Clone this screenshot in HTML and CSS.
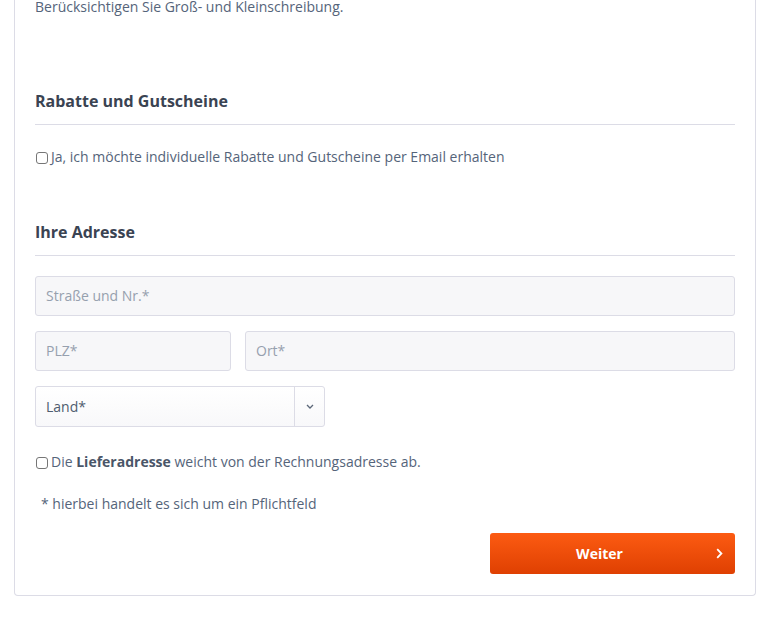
FILE: index.html
```html
<!DOCTYPE html>
<html lang="de">
<head>
<meta charset="utf-8">
<link rel="stylesheet" href="styles.css">
</head>
<body>
<div class="page">
  <div class="card">
    <p class="hint">Berücksichtigen Sie Groß- und Kleinschreibung.</p>

    <h2 class="section-title first">Rabatte und Gutscheine</h2>
    <label class="check-row news"><input type="checkbox" class="cb"><span>Ja, ich möchte individuelle Rabatte und Gutscheine per Email erhalten</span></label>

    <h2 class="section-title second">Ihre Adresse</h2>
    <div class="fields">
      <div class="field full">Straße und Nr.*</div>
      <div class="row">
        <div class="field zip">PLZ*</div>
        <div class="field city">Ort*</div>
      </div>
      <div class="select">
        <span class="select-value">Land*</span>
        <span class="select-arrow">
          <svg width="8" height="5" viewBox="0 0 8 5"><path d="M1 1 L4 4 L7 1" fill="none" stroke="#5b6778" stroke-width="1.3"/></svg>
        </span>
      </div>
    </div>

    <label class="check-row alt"><input type="checkbox" class="cb"><span>Die <b>Lieferadresse</b> weicht von der Rechnungsadresse ab.</span></label>
    <p class="required">* hierbei handelt es sich um ein Pflichtfeld</p>

    <div class="actions">
      <button class="btn-next"><span class="btn-label">Weiter</span>
        <svg class="btn-icon" width="7" height="11" viewBox="0 0 7 11"><path d="M1.2 1.2 L5.4 5.5 L1.2 9.8" fill="none" stroke="#fff" stroke-width="1.8"/></svg>
      </button>
    </div>
  </div>
</div>
</body>
</html>
```
FILE: styles.css
```css
* { box-sizing: border-box; }
html, body { margin: 0; padding: 0; background: #fff; }
body {
  font-family: "Open Sans", "Noto Sans", sans-serif;
  font-size: 14px;
  line-height: 20px;
  color: #55647a;
}
.page { padding: 0 28px 0 14px; }
.card {
  width: 742px;
  border: 1px solid #dcdce6;
  border-top: none;
  border-radius: 0 0 4px 4px;
  padding: 0 20px 21px 20px;
}
.hint { margin: -3px 0 0 0; }
.section-title {
  margin: 0;
  font-size: 16px;
  line-height: 24px;
  font-weight: 700;
  color: #3a4352;
  padding-top: 1px;
  padding-bottom: 11px;
  border-bottom: 1px solid #dcdce6;
}
.section-title.first { margin-top: 71px; }
.section-title.second { margin-top: 52px; }
.check-row {
  display: flex;
  align-items: center;
  margin: 0;
}
.check-row.news { margin-top: 22px; }
.check-row.alt { margin-top: 25px; }
.cb {
  width: 12px;
  height: 12px;
  margin: 1px 3px 0 1px;
  appearance: none;
  -webkit-appearance: none;
  border: 1px solid #767676;
  border-radius: 3px;
  background: #fff;
  flex: none;
}
.check-row b { font-weight: 700; color: #4a5668; }
.fields {
  margin-top: 20px;
  display: flex;
  flex-direction: column;
  gap: 15px;
}
.field {
  height: 40px;
  background: #f7f7f9;
  border: 1px solid #dcdce6;
  border-radius: 3px;
  padding: 0 10px;
  display: flex;
  align-items: center;
  color: #96a0ae;
}
.row { display: flex; gap: 14px; }
.zip { width: 196px; }
.city { flex: 1; }
.select {
  width: 290px;
  height: 41px;
  border: 1px solid #dcdce6;
  border-radius: 3px;
  background: linear-gradient(#ffffff, #f8f8fa);
  display: flex;
  color: #4f5c6f;
}
.select-value { flex: 1; display: flex; align-items: center; padding-left: 10px; }
.select-arrow {
  width: 30px;
  border-left: 1px solid #dcdce6;
  display: flex;
  align-items: center;
  justify-content: center;
}
.required { margin: 22px 0 0 6px; }
.actions { display: flex; justify-content: flex-end; margin-top: 19px; }
.btn-next {
  width: 245px;
  height: 41px;
  border: none;
  border-radius: 3px;
  background: linear-gradient(#fc5b12, #df4002);
  color: #fff;
  font-family: inherit;
  font-size: 14px;
  font-weight: 700;
  display: flex;
  align-items: center;
  padding: 0 12px 0 0;
}
.btn-label { flex: 1; text-align: center; margin-right: 7px; }
.btn-icon { flex: none; }
```
